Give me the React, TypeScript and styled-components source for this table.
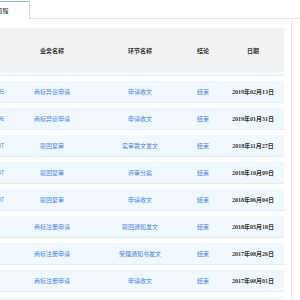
import React, { useLayoutEffect, useRef } from 'react'
import styled, { createGlobalStyle } from 'styled-components'

const GlobalStyle = createGlobalStyle`
  html, body { margin:0; padding:0; background:#fff; overflow:hidden; }
  body { font-family:'Noto Sans CJK SC','Noto Sans',sans-serif; }
`

const Viewport = styled.div`width:300px; height:300px; overflow:hidden; background:#fff;`

const Page = styled.div`width:336px;`

const TabBar = styled.div`display:flex; height:17px; padding-top:1px; border-bottom:1px solid #e2e2e2;`

const Tab = styled.div`
  width:66px; box-sizing:border-box; display:flex; align-items:center; justify-content:center;
  border-top:1px solid #8fb4e6; border-right:1px solid #dcdcdc; background:#fff;
  margin-bottom:-1px; font-size:6px; color:#333;
`

const Panel = styled.div`
  width:328px; box-sizing:border-box; padding:9px 7px 0 7px;
  border-right:1px solid #e6e6e6; border-left:1px solid #e6e6e6;
`

const cols = '31px 98px 78px 48px 52px'

const Header = styled.div`
  display:grid; grid-template-columns:${cols}; padding-right:5px;
  height:44px; align-items:center; background:#f2f2f2;
`

const HeadCell = styled.div`
  display:flex; justify-content:center; white-space:nowrap;
  font-size:6px; font-weight:bold; color:#333;
`

const Body = styled.div`
  height:229px; overflow-y:scroll; overflow-x:hidden;
  &::-webkit-scrollbar { width:5px; }
  &::-webkit-scrollbar-track { background:#f6f6f6; border-left:1px solid #ececec; }
  &::-webkit-scrollbar-thumb { background:#c4c4c4; border-radius:3px; }
`

const Row = styled.div`
  display:grid; grid-template-columns:${cols}; height:22px; margin-top:5px;
  align-items:center; background:#eef8fd; box-sizing:border-box;
  border-bottom:1px solid #e3eef4;
`

const Cell = styled.div<{ $date?: boolean }>`
  display:flex; justify-content:center; white-space:nowrap; font-size:6px;
  color:${p => (p.$date ? '#333' : '#4a82d8')};
  font-weight:${p => (p.$date ? 'bold' : 'normal')};
  font-family:${p => (p.$date ? "'Liberation Serif','Noto Sans CJK SC',serif" : "'Noto Sans CJK SC',sans-serif")};
`

type Item = { no: string; biz: string; step: string; res: string; date: string }

const visible: Item[] = [
  { no: '2019021305', biz: '商标异议申请', step: '申请收文', res: '结束', date: '2019年02月13日' },
  { no: '2019013106', biz: '商标异议申请', step: '申请收文', res: '结束', date: '2019年01月31日' },
  { no: '2018112707', biz: '驳回复审', step: '实审裁文发文', res: '结束', date: '2018年11月27日' },
  { no: '2018100907', biz: '驳回复审', step: '评审分案', res: '结束', date: '2018年10月09日' },
  { no: '2018060407', biz: '驳回复审', step: '申请收文', res: '结束', date: '2018年06月04日' },
  { no: '2513676', biz: '商标注册申请', step: '驳回通知发文', res: '结束', date: '2018年05月18日' },
  { no: '2513676', biz: '商标注册申请', step: '受理通知书发文', res: '结束', date: '2017年08月26日' },
  { no: '2513676', biz: '商标注册申请', step: '申请收文', res: '结束', date: '2017年08月01日' },
]

const bizList = ['商标异议申请', '驳回复审', '商标注册申请', '商标续展申请']
const stepList = ['申请收文', '评审分案', '实审裁文发文', '受理通知书发文']

const pad = (n: number) => (n < 10 ? '0' + n : '' + n)

const filler = (i: number, year: number): Item => ({
  no: '2019' + pad((i % 12) + 1) + pad(i % 28 + 1) + '1',
  biz: bizList[i % bizList.length],
  step: stepList[i % stepList.length],
  res: '结束',
  date: `${year}年${pad(12 - (i % 12))}月${pad(28 - (i % 27))}日`,
})

const rows: Item[] = [
  ...Array.from({ length: 44 }, (_, i) => filler(i, 2021 - Math.floor(i / 20))),
  ...visible,
  filler(52, 2017),
  filler(53, 2017),
]

const App = () => {
  const viewRef = useRef<HTMLDivElement>(null)
  const bodyRef = useRef<HTMLDivElement>(null)

  useLayoutEffect(() => {
    // page is scrolled a bit to the right, list scrolled near its end
    if (viewRef.current) viewRef.current.scrollLeft = 36
    if (bodyRef.current) bodyRef.current.scrollTop = 5 + 27 * 44 - 9
  }, [])

  return (
    <Viewport ref={viewRef}>
      <GlobalStyle />
      <Page>
        <TabBar>
          <Tab>业务流程</Tab>
        </TabBar>
        <Panel>
          <Header>
            <HeadCell>申请号</HeadCell>
            <HeadCell>业务名称</HeadCell>
            <HeadCell>环节名称</HeadCell>
            <HeadCell>结论</HeadCell>
            <HeadCell>日期</HeadCell>
          </Header>
          <Body ref={bodyRef}>
            {rows.map((r, i) => (
              <Row key={i}>
                <Cell>{r.no}</Cell>
                <Cell>{r.biz}</Cell>
                <Cell>{r.step}</Cell>
                <Cell>{r.res}</Cell>
                <Cell $date>{r.date}</Cell>
              </Row>
            ))}
          </Body>
        </Panel>
      </Page>
    </Viewport>
  )
}

export default App
